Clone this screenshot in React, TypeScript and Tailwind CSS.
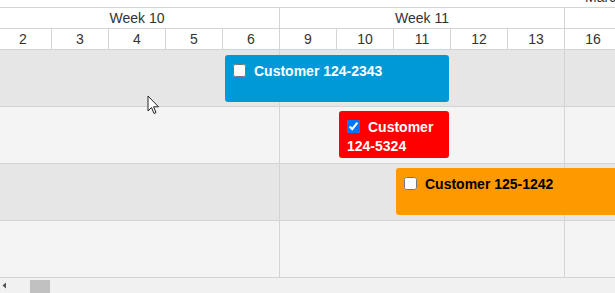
import React from "react";

const days = ["2", "3", "4", "5", "6", "9", "10", "11", "12", "13", "16", ""];

const events = [
    { id: 1, row: 0, left: 225, width: 224, color: "bg-[#0099d8]", text: "text-white", label: "Customer 124-2343", checked: false },
    { id: 2, row: 1, left: 339, width: 110, color: "bg-[#ff0000]", text: "text-white", label: "Customer 124-5324", checked: true },
    { id: 3, row: 2, left: 396, width: 240, color: "bg-[#ff9900]", text: "text-black", label: "Customer 125-1242", checked: false },
];

const rowBg = ["bg-[#e6e6e6]", "bg-[#f4f4f4]", "bg-[#e6e6e6]", "bg-[#f4f4f4]"];

function Cursor() {
    return (
        <svg className="absolute left-[147px] top-[95px]" width="13" height="21" viewBox="0 0 13 21">
            <path d="M1 1 L1 16 L4.5 12.5 L7 18.5 L9 17.6 L6.6 11.8 L11.5 11.8 Z" fill="#fff" stroke="#222" strokeWidth="1" strokeLinejoin="round" />
        </svg>
    );
}

export default function App() {
    return (
        <div className="relative w-[615px] h-[293px] overflow-hidden bg-white text-[14px] text-[#333] font-['Liberation_Sans',Arial,sans-serif]">
            {/* month row, mostly scrolled out */}
            <div className="h-[8px] flex items-end overflow-hidden border-b border-[#d4d4d4]">
                <span className="ml-[585px] leading-[20px] shrink-0 whitespace-nowrap">March</span>
            </div>

            {/* weeks */}
            <div className="flex h-[21px] ml-[-5px] border-b border-[#d4d4d4]">
                <div className="w-[285px] shrink-0 border-r border-[#d4d4d4] flex items-center justify-center">Week 10</div>
                <div className="w-[285px] shrink-0 border-r border-[#d4d4d4] flex items-center justify-center">Week 11</div>
                <div className="w-[285px] shrink-0 border-r border-[#d4d4d4]"></div>
            </div>

            {/* days */}
            <div className="flex h-[21px] ml-[-5px] border-b border-[#d4d4d4]">
                {days.map((d, i) => (
                    <div key={i} className="w-[57px] shrink-0 border-r border-[#d4d4d4] flex items-center justify-center">{d}</div>
                ))}
            </div>

            {/* body */}
            <div className="relative">
                {rowBg.map((bg, i) => (
                    <div key={i} className={`flex h-[57px] ml-[-5px] border-b border-[#d4d4d4] ${bg}`}>
                        <div className="w-[285px] shrink-0 border-r border-[#d4d4d4]"></div>
                        <div className="w-[285px] shrink-0 border-r border-[#d4d4d4]"></div>
                        <div className="w-[285px] shrink-0"></div>
                    </div>
                ))}

                {events.map((ev) => (
                    <div
                        key={ev.id}
                        className={`absolute h-[47px] rounded-[3px] pl-[8px] pr-2 pt-[7px] font-bold leading-[19px] ${ev.color} ${ev.text}`}
                        style={{ left: ev.left, width: ev.width, top: ev.row * 57 + (ev.row === 0 ? 5 : 4) }}
                    >
                        <input type="checkbox" readOnly checked={ev.checked} className="w-[13px] h-[13px] m-0 mr-[8px] align-[-1px]" />
                        {ev.label}
                    </div>
                ))}
            </div>

            {/* horizontal scrollbar */}
            <div className="flex items-center h-[15px] bg-[#f1f1f1]">
                <svg width="9" height="15" viewBox="0 0 9 15" className="shrink-0">
                    <path d="M2.5 7.5 L6 4.5 L6 10.5 Z" fill="#505050" />
                </svg>
                <div className="ml-[21px] w-[20px] h-[13px] mt-[2px] bg-[#c1c1c1]"></div>
            </div>

            <Cursor />
        </div>
    );
}
